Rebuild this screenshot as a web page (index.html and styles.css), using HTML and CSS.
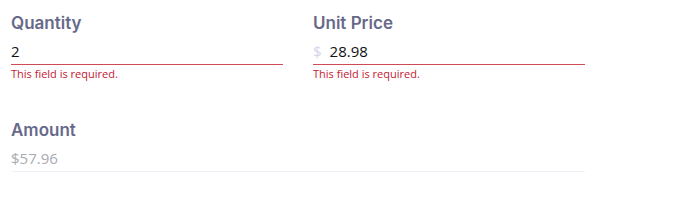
FILE: index.html
```html
<!DOCTYPE html>
<html>
<head>
<meta charset="utf-8">
<link rel="stylesheet" href="styles.css">
</head>
<body>
<div class="form">
  <div class="row">
    <div class="field">
      <div class="label">Quantity</div>
      <div class="input error">
        <span class="value">2</span>
      </div>
      <div class="msg">This field is required.</div>
    </div>
    <div class="field">
      <div class="label">Unit Price</div>
      <div class="input error">
        <span class="prefix">$</span>
        <span class="value">28.98</span>
      </div>
      <div class="msg">This field is required.</div>
    </div>
  </div>
  <div class="field wide">
    <div class="label">Amount</div>
    <div class="input readonly">
      <span class="value muted">$57.96</span>
    </div>
  </div>
</div>
</body>
</html>
```
FILE: styles.css
```css
html, body {
  margin: 0;
  padding: 0;
  background: #ffffff;
}
body {
  font-family: "Open Sans", "Noto Sans", sans-serif;
}
.form {
  padding: 12px 0 0 11px;
  width: 574px;
}
.row {
  display: grid;
  grid-template-columns: 272px 272px;
  column-gap: 30px;
}
.label {
  font-family: "Inter", "Open Sans", sans-serif;
  font-weight: 600;
  font-size: 17px;
  line-height: 22px;
  color: #67698a;
}
.input {
  display: flex;
  align-items: center;
  gap: 8px;
  height: 27px;
  margin-top: 4px;
  box-sizing: border-box;
  border-bottom: 1px solid #eef1f7;
}
.input.error {
  border-bottom-color: #cf4a55;
}
.value {
  font-size: 15px;
  color: #111111;
}
.prefix {
  font-size: 15px;
  color: #d3d6ea;
}
.value.muted {
  color: #a9abb3;
}
.msg {
  font-size: 11px;
  line-height: 16px;
  color: #c2202f;
  margin-top: 1px;
}
.wide {
  margin-top: 37px;
}
```
